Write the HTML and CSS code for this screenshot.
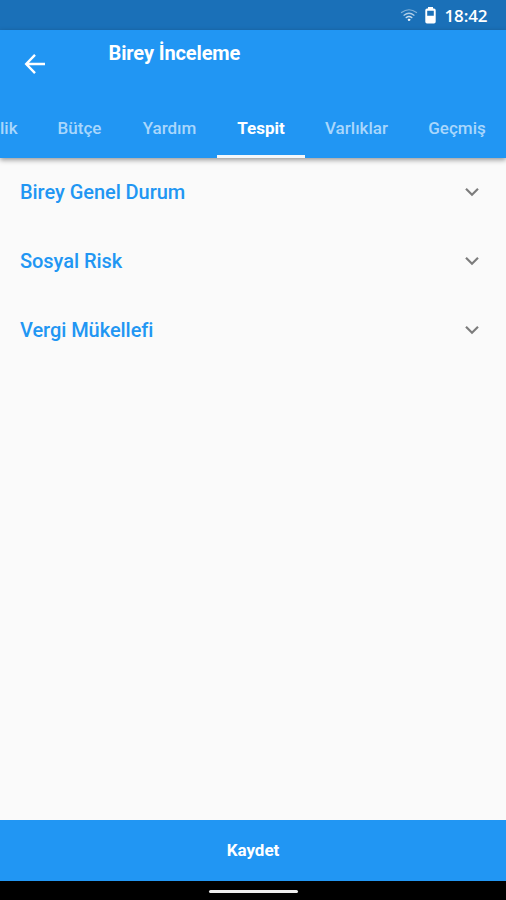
FILE: index.html
```html
<!DOCTYPE html>
<html lang="tr">
<head>
<meta charset="utf-8">
<title>Birey İnceleme</title>
<link rel="stylesheet" href="styles.css">
</head>
<body>
<div class="status">
  <svg class="wifi" width="18" height="14" viewBox="0 0 18 14" fill="none" stroke="#fff" stroke-linecap="round"><path d="M1.500 4.500Q9-1 16.500 4.500" stroke-width="1.200" opacity=".45"/><path d="M4 7.200Q9 3.300 14 7.200" stroke-width="1.300" opacity=".65"/><path d="M6.200 9.600Q9 7.500 11.800 9.600" stroke-width="1.400" opacity=".75"/><circle cx="9" cy="11.800" r=".8" fill="#fff"/></svg>
  <svg class="battery" width="11" height="17" viewBox="0 0 11 17"><path fill="#fff" fill-rule="evenodd" d="M3 0h5v1.500h1a1.700 1.700 0 0 1 1.700 1.700v11.500A1.800 1.800 0 0 1 9 16.500H2A1.800 1.800 0 0 1 .3 14.700V3.200A1.700 1.700 0 0 1 2 1.500h1zM2.200 3.800v4.900h6.600V3.800z"/></svg>
  <span class="clock">18:42</span>
</div>
<header class="header">
  <div class="bar">
    <svg class="back" width="22" height="22" viewBox="0 0 22 22" fill="none" stroke="#fff" stroke-width="2.400"><path d="M11 1.800 2.200 11 11 20.200M2.200 11H21"/></svg>
    <h1 class="title">Birey İnceleme</h1>
  </div>
  <nav class="tabs">
    <span class="tab t-lik">lik</span>
    <span class="tab t-butce">Bütçe</span>
    <span class="tab t-yardim">Yardım</span>
    <span class="tab t-tespit active">Tespit</span>
    <span class="tab t-varlik">Varlıklar</span>
    <span class="tab t-gecmis">Geçmiş</span>
  </nav>
</header>
<main class="list">
  <div class="row"><span>Birey Genel Durum</span><svg width="16" height="10" viewBox="0 0 16 10"><path d="m2 1.800 6 6 6-6"/></svg></div>
  <div class="row"><span>Sosyal Risk</span><svg width="16" height="10" viewBox="0 0 16 10"><path d="m2 1.800 6 6 6-6"/></svg></div>
  <div class="row"><span>Vergi Mükellefi</span><svg width="16" height="10" viewBox="0 0 16 10"><path d="m2 1.800 6 6 6-6"/></svg></div>
</main>
<div class="save">Kaydet</div>
<div class="gesture"><i></i></div>
</body>
</html>
```
FILE: styles.css
```css
* { box-sizing: border-box; }
body { margin: 0; height: 900px; overflow: hidden; display: flex; flex-direction: column; background: #fafafa; font-family: Roboto, "Liberation Sans", sans-serif; }
.status { height: 30px; flex: none; background: #1a70b8; display: flex; align-items: center; justify-content: flex-end; padding-right: 18.5px; color: #fff; }
.wifi { margin-right: 7px; }
.battery { margin-right: 8px; }
.clock { font: 600 17px/30px "Open Sans", sans-serif; padding-top: 2px; letter-spacing: -.1px; }
.header { height: 127.5px; flex: none; background: #2196f3; color: #fff; display: flex; flex-direction: column; justify-content: space-between; box-shadow: 0 2px 5px rgba(0, 0, 0, .4); }
.bar { display: flex; height: 67.5px; }
.back { margin: 23px 0 0 24px; }
.title { margin: 11px 0 0 62.5px; font-size: 20px; line-height: 24px; font-weight: 700; letter-spacing: -.12px; }
.tabs { display: flex; height: 60px; overflow: hidden; }
.tab { flex: none; height: 60px; line-height: 60px; text-align: center; font-size: 17px; font-weight: 500; color: #a9d7fc; white-space: nowrap; border-bottom: 3px solid transparent; }
.t-lik { width: 37px; text-align: right; padding-right: 20px; }
.t-butce { width: 85px; }
.t-yardim { width: 95px; }
.t-tespit { width: 88px; }
.t-varlik { width: 103px; }
.t-gecmis { width: 98px; }
.active { color: #fff; font-weight: 700; border-color: #f4f8fb; }
.list { flex: 1; }
.row { height: 69px; display: flex; align-items: center; justify-content: space-between; padding: 0 26px 0 20px; font-size: 20px; font-weight: 500; color: #2196f3; letter-spacing: -.05px; }
.row span { line-height: 24px; padding-bottom: 1px; }
.row svg { fill: none; stroke: #7c7c7c; stroke-width: 2.200; }
.save { height: 61px; flex: none; background: #2196f3; color: #fff; text-align: center; font-size: 17px; font-weight: 700; line-height: 61px; }
.gesture { height: 19px; flex: none; background: #000; display: flex; justify-content: center; padding-top: 9px; }
.gesture i { width: 89px; height: 3px; border-radius: 2px; background: #eee; }
```
